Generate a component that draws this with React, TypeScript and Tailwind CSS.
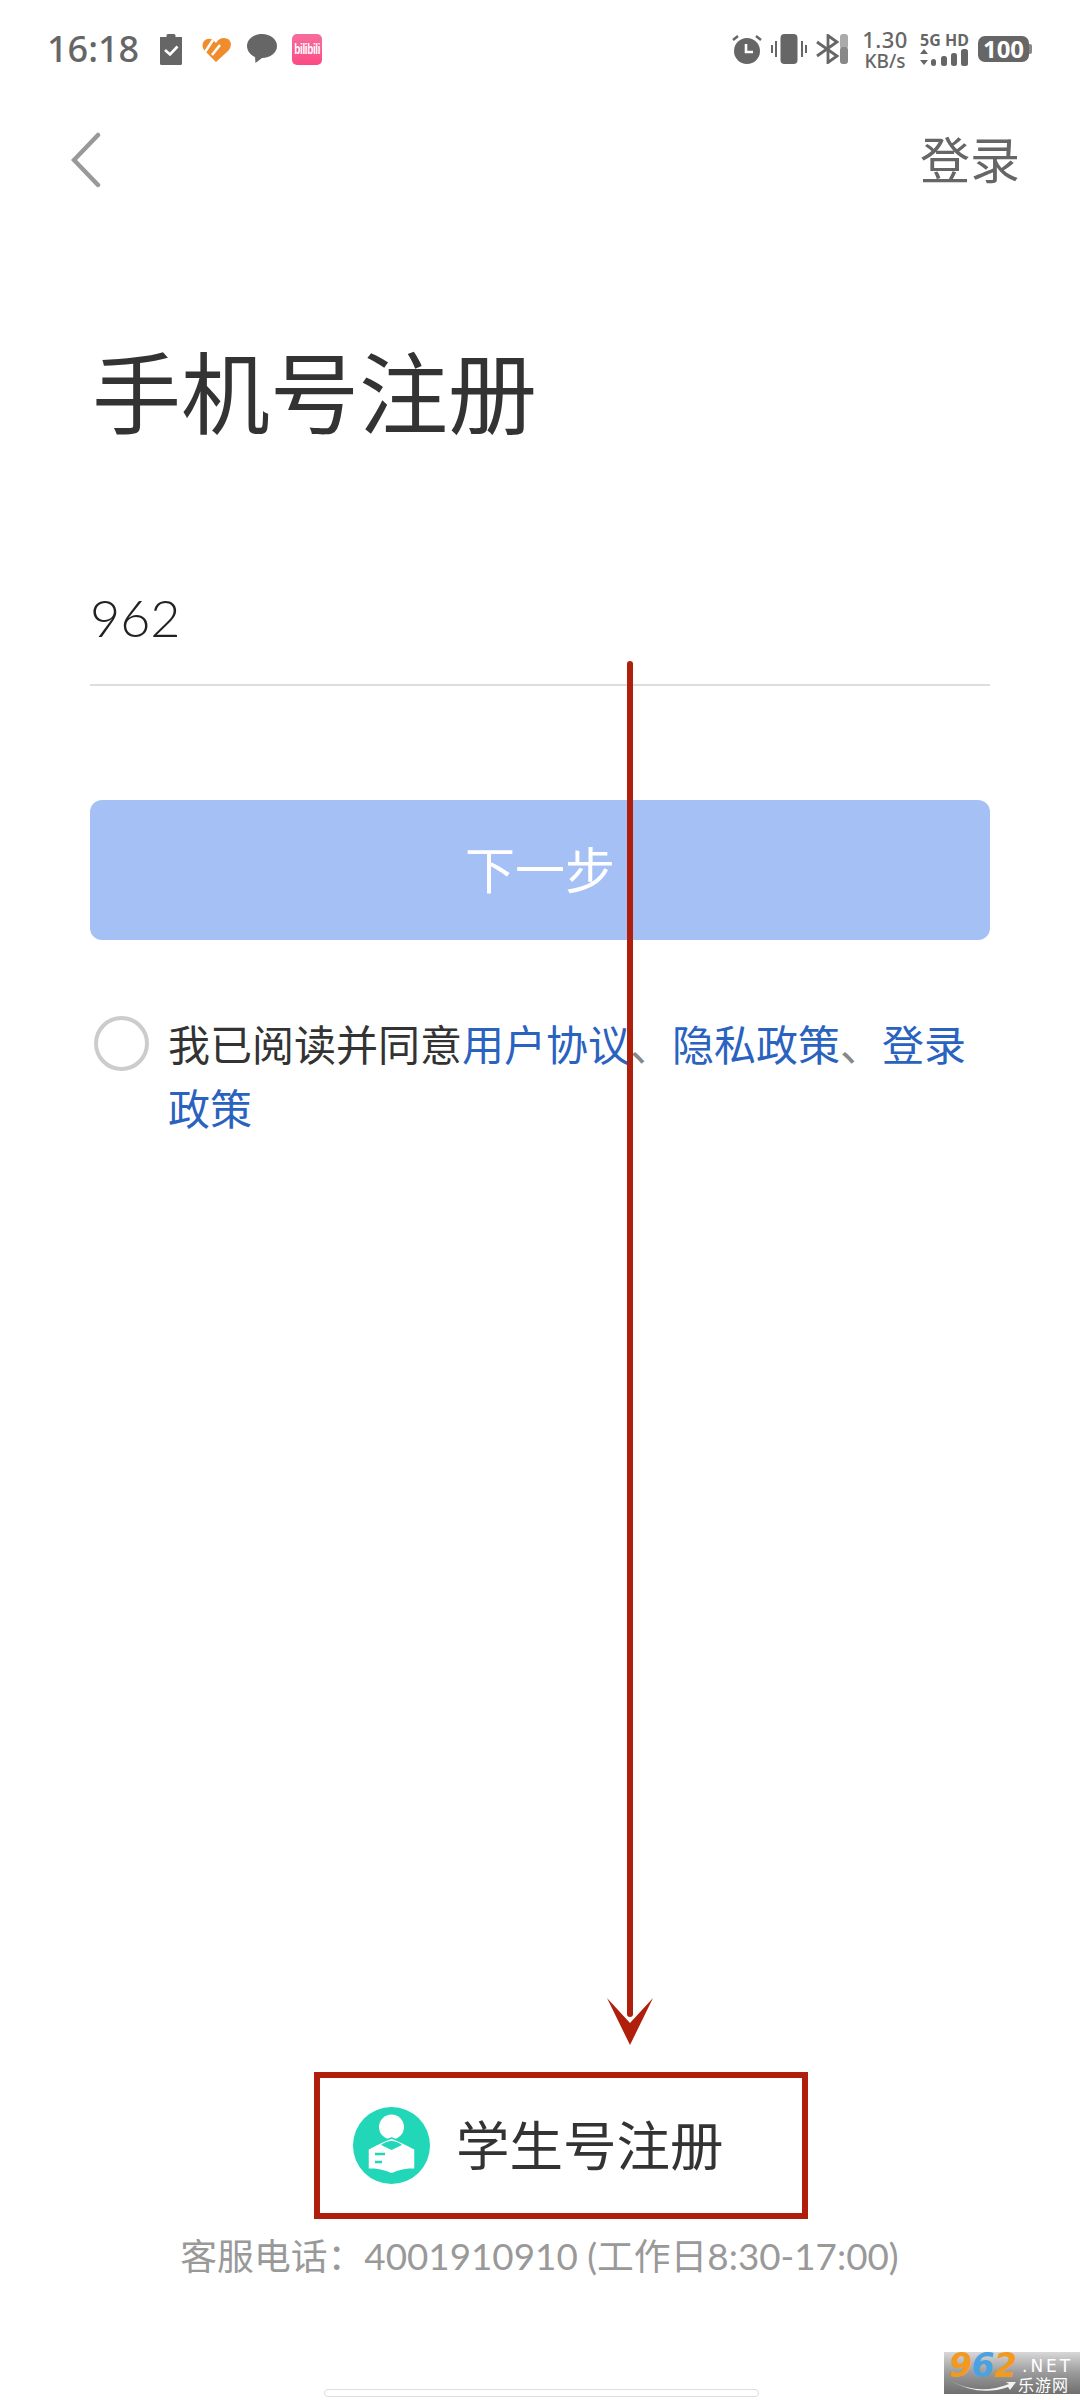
function TaskIcon() {
  return (
    <svg width="22" height="31" viewBox="0 0 22 31">
      <path d="M0 3h6.5V1.5Q6.5 0 8 0h6q1.5 0 1.5 1.5V3H22v26.5q0 1.5-1.5 1.5h-19Q0 31 0 29.5z" fill="#666" />
      <path d="M5 16l5 4.5 7.5-8" fill="none" stroke="#fff" strokeWidth="2.6" />
    </svg>
  );
}

function HeartIcon() {
  return (
    <svg width="29" height="25" viewBox="0 0 29 25">
      <path d="M14 25L2 13Q-1 8 2 4q4-4 9-1l3 3q3-5 8-5 6 0 7 6 0 4-3 7z" fill="#f08c2c" />
      <path d="M1 18L11 3M10 18l8-10" stroke="#fff" strokeWidth="2.6" />
    </svg>
  );
}

function BubbleIcon() {
  return (
    <svg width="30" height="30" viewBox="0 0 30 30">
      <path d="M15 0C6.7 0 0 5.3 0 12c0 5 3.7 9.2 8 11l.5 6 6.5-5c8.3 0 15-5.3 15-12S23.3 0 15 0z" fill="#666" />
    </svg>
  );
}

function BiliIcon() {
  return (
    <div className="relative flex h-[31px] w-[30px] items-center justify-center overflow-hidden rounded-[5px] bg-gradient-to-b from-[#f56d9c] to-[#fb4a85]">
      <span className="scale-y-150 font-['Liberation_Sans',sans-serif] text-[10px] font-bold leading-none tracking-[-0.4px] text-white">
        bilibili
      </span>
    </div>
  );
}

function AlarmIcon() {
  return (
    <svg width="30" height="30" viewBox="0 0 30 30">
      <circle cx="15" cy="17" r="13" fill="#666" />
      <path d="M1 6l5-4M29 6l-5-4" stroke="#666" strokeWidth="2.5" />
      <path d="M14 10v8h7" fill="none" stroke="#fff" strokeWidth="2.6" />
    </svg>
  );
}

function VibrateIcon() {
  return (
    <svg width="36" height="30" viewBox="0 0 36 30">
      <rect x="9.5" y="0" width="17" height="30" rx="4" fill="#666" />
      <path d="M5 7v16M1 11v8M31 7v16M35 11v8" stroke="#666" strokeWidth="2" />
    </svg>
  );
}

function BluetoothIcon() {
  return (
    <svg width="32" height="30" viewBox="0 0 32 30">
      <path d="M1 8l20 14-9 6.5V1.5l9 6.5L1 22" fill="none" stroke="#666" strokeWidth="2.8" />
      <rect x="24" y="0" width="8" height="15" rx="3" fill="#aaa" />
      <rect x="24" y="13" width="8" height="17" rx="3" fill="#888" />
    </svg>
  );
}

function SignalIcon() {
  return (
    <svg width="48" height="17" viewBox="0 0 48 17">
      <path d="M4 0l4 5H0zM4 16l4-5H0z" fill="#666" />
      <rect x="11" y="10" width="5" height="7" rx="2.5" fill="#666" />
      <rect x="21" y="7" width="6" height="10" rx="2.5" fill="#666" />
      <rect x="31" y="4" width="6" height="13" rx="2.5" fill="#666" />
      <rect x="41" y="0" width="7" height="17" rx="2.5" fill="#666" />
    </svg>
  );
}

function StudentIcon() {
  return (
    <svg width="77" height="77" viewBox="0 0 77 77" className="shrink-0">
      <circle cx="38.5" cy="38.5" r="38.5" fill="#22d6b8" />
      <circle cx="38.5" cy="20" r="12.5" fill="#fff" />
      <path
        d="M15 42Q28 35 38.5 31Q49 35 62 42V62Q49 62 38.5 67Q28 62 15 62Z"
        fill="#fff"
        stroke="#22d6b8"
        strokeWidth="1.5"
      />
      <path d="M28 38Q38.5 30 49 38L38.5 43Z" fill="#22d6b8" />
      <path d="M22 47h10M22 55h7" stroke="#22d6b8" strokeWidth="2.5" />
    </svg>
  );
}

function Watermark() {
  return (
    <div className="absolute bottom-[6px] right-0 flex h-[42px] w-[136px] bg-gradient-to-b from-[#d8d8d8] via-[#9a9a9a] to-[#6f6f6f] pl-[5px]">
      <div className="flex w-[73px] flex-col">
        <span className="font-['DejaVu_Sans',sans-serif] text-[33px] font-bold italic leading-[27px] tracking-[-0.5px]">
          <span className="text-[#f29a1f]">9</span>
          <span className="text-[#4aa3e0]">6</span>
          <span className="text-[#f29a1f]">2</span>
        </span>
        <svg width="68" height="15" viewBox="0 0 68 15">
          <path d="M2 2Q30 17 60 5l-3-2 10 0-6 8-2-3Q30 18 2 2z" fill="#f2f2f2" />
        </svg>
      </div>
      <div className="flex flex-col pt-[6px] text-white">
        <span className="font-['DejaVu_Sans',sans-serif] text-[17px] leading-[16px] tracking-[3px]">.NET</span>
        <span className="-ml-[4px] mt-[3px] font-['Noto_Sans_CJK_SC',sans-serif] text-[16px] leading-[15px] tracking-[1px]">
          乐游网
        </span>
      </div>
    </div>
  );
}

export default function App() {
  return (
    <div className="relative flex h-[2400px] w-[1080px] flex-col overflow-hidden bg-white font-['Lato','Noto_Sans_CJK_SC',sans-serif] text-[#333]">
      {/* status bar */}
      <div className="flex h-[100px] items-center justify-between pb-[2px] pl-[47px] pr-[48px] text-[#666]">
        <div className="flex items-center">
          <span className="font-['Noto_Sans',sans-serif] text-[36px] font-medium leading-none">16:18</span>
          <div className="ml-[21px] flex items-center">
            <TaskIcon />
            <div className="ml-[20px]">
              <HeartIcon />
            </div>
            <div className="ml-[16px]">
              <BubbleIcon />
            </div>
            <div className="ml-[15px]">
              <BiliIcon />
            </div>
          </div>
        </div>
        <div className="flex items-center">
          <AlarmIcon />
          <div className="ml-[9px]">
            <VibrateIcon />
          </div>
          <div className="ml-[9px]">
            <BluetoothIcon />
          </div>
          <div className="ml-[15px] flex w-[44px] flex-col items-center font-['Noto_Sans',sans-serif] leading-none">
            <span className="text-[22px] font-medium tracking-[0.5px]">1.30</span>
            <span className="mt-[2px] text-[19px] font-medium">KB/s</span>
          </div>
          <div className="ml-[13px] flex w-[48px] flex-col font-['Noto_Sans',sans-serif] leading-none">
            <span className="whitespace-nowrap text-[16px] font-bold leading-[14px]">5G HD</span>
            <div className="mt-[2px]">
              <SignalIcon />
            </div>
          </div>
          <div className="ml-[10px] flex items-center">
            <div className="flex h-[26px] w-[51px] items-center justify-center rounded-[7px] bg-[#666] font-['Noto_Sans',sans-serif] text-[24px] font-bold leading-none text-white">
              100
            </div>
            <div className="h-[10px] w-[3px] rounded-r-[2px] bg-[#888]" />
          </div>
        </div>
      </div>

      {/* nav */}
      <div className="flex h-[120px] items-center justify-between pl-[71px] pr-[60px]">
        <svg width="30" height="56" viewBox="0 0 30 56">
          <path d="M27 3L3 28l24 25" fill="none" stroke="#999" strokeWidth="4.5" strokeLinecap="round" />
        </svg>
        <span className="text-[50px] leading-none text-[#666]">登录</span>
      </div>

      <div className="flex flex-1 flex-col px-[90px]">
        <h1 className="ml-[2px] mt-[128px] text-[89px] font-normal leading-none">手机号注册</h1>

        <div className="mt-[154px] border-b-2 border-[#ddd] pb-[41px]">
          <span className="block text-[52px] font-light leading-none text-[#222]">962</span>
        </div>

        <button className="mt-[114px] flex h-[140px] items-center justify-center rounded-[12px] bg-[#a5c0f5] text-[50px] leading-none text-white">
          下一步
        </button>

        <div className="mt-[74px] flex items-start">
          <div className="ml-[4px] mt-[2px] h-[55px] w-[55px] shrink-0 rounded-full border-[4px] border-[#ccc]" />
          <p className="-mt-[1px] ml-[19px] text-[42px] leading-[64px]">
            我已阅读并同意<span className="text-[#2a62c0]">用户协议</span>
            <span className="text-[#888]">、</span>
            <span className="text-[#2a62c0]">隐私政策</span>
            <span className="text-[#888]">、</span>
            <span className="text-[#2a62c0]">登录</span>
            <span className="text-[#2a62c0]">政策</span>
          </p>
        </div>

        {/* student entry */}
        <div className="mt-auto flex flex-col items-center">
          <div className="ml-[224px] flex h-[147px] w-[494px] items-center self-start border-[6px] border-[#b01e0c] pl-[33px]">
            <StudentIcon />
            <span className="ml-[26px] text-[53.5px] leading-none">学生号注册</span>
          </div>
          <p className="mb-[122px] mt-[15px] -ml-[1px] whitespace-nowrap text-[36.8px] leading-[44px] text-[#999]">
            客服电话：4001910910 (工作日8:30-17:00)
          </p>
        </div>
      </div>

      {/* home indicator */}
      <div className="absolute bottom-[3px] left-[324px] h-[8px] w-[435px] rounded-full border border-[#ddd] bg-white" />

      {/* annotation arrow */}
      <svg className="absolute left-[600px] top-[660px]" width="60" height="1390" viewBox="0 0 60 1390">
        <path d="M30 4v1350" stroke="#b01e0c" strokeWidth="6" strokeLinecap="round" />
        <path d="M7 1338l23 25 23-25-23 47z" fill="#b01e0c" />
      </svg>

      <Watermark />
    </div>
  );
}
